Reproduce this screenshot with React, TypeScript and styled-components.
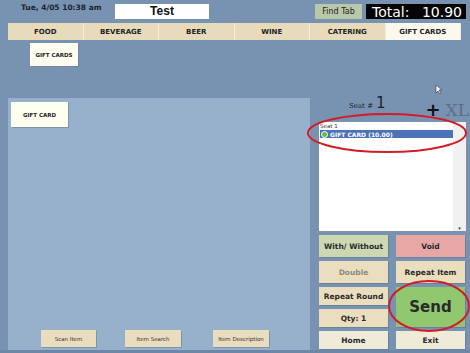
import styled, { createGlobalStyle } from "styled-components";

const Global = createGlobalStyle`
  body {
    margin: 0;
    background: #7893b2;
    font-family: "DejaVu Sans", Verdana, sans-serif;
  }
`;

const Screen = styled.div`
  position: relative;
  width: 470px;
  height: 353px;
  overflow: hidden;
  background: #7893b2;
`;

const TopBar = styled.div`
  height: 23px;
  display: flex;
  align-items: flex-start;
  padding-top: 4px;
  box-sizing: border-box;
`;

const DateText = styled.div`
  font-size: 7.5px;
  font-weight: bold;
  color: #1d2230;
  margin: -1px 0 0 21px;
  width: 94px;
`;

const TitleBox = styled.div`
  width: 94px;
  height: 15px;
  background: #fff;
  font: bold 12px "Liberation Sans", Arial, sans-serif;
  color: #111;
  text-align: center;
  line-height: 15px;
`;

const FindTab = styled.div`
  margin-left: 106px;
  width: 47px;
  height: 15px;
  background: #b9c8a9;
  font: 8px "DejaVu Sans", sans-serif;
  color: #222;
  text-align: center;
  line-height: 15px;
`;

const TotalBox = styled.div`
  margin-left: 4px;
  width: 100px;
  height: 15px;
  background: #050505;
  color: #fff;
  font: 14px "DejaVu Sans", sans-serif;
  display: flex;
  justify-content: space-between;
  align-items: center;
  padding: 0 4px 0 6px;
  box-sizing: border-box;
`;

const Tabs = styled.div`
  margin-left: 8px;
  width: 453px;
  height: 17px;
  display: grid;
  grid-template-columns: repeat(6, 1fr);
`;

const Tab = styled.div<{ $active?: boolean }>`
  background: ${(p) => (p.$active ? "#fbf8ee" : "#e8dbbc")};
  border-right: 1px solid #f4ecd8;
  font-size: 7px;
  font-weight: bold;
  color: #222;
  display: flex;
  align-items: center;
  justify-content: center;
`;

const SubRow = styled.div`
  height: 58px;
  padding: 3px 0 0 30px;
  box-sizing: border-box;
`;

const SubButton = styled.div`
  width: 48px;
  height: 23px;
  background: #fffdf0;
  font-size: 5.5px;
  font-weight: bold;
  color: #222;
  display: flex;
  align-items: center;
  justify-content: center;
  box-shadow: 1px 1px 0 #6f86a3;
`;

const Main = styled.div`
  display: flex;
  height: 252px;
`;

const LeftPanel = styled.div`
  margin-left: 8px;
  width: 302px;
  background: #97b0cc;
  display: flex;
  flex-direction: column;
  justify-content: space-between;
  padding: 4px 0 3px 3px;
  box-sizing: border-box;
`;

const ItemButton = styled.div`
  width: 57px;
  height: 25px;
  background: #fffff0;
  font-size: 5.5px;
  font-weight: bold;
  color: #222;
  display: flex;
  align-items: center;
  justify-content: center;
  box-shadow: 1px 1px 0 #7d93ae;
`;

const BottomTools = styled.div`
  display: flex;
  padding-left: 30px;
  gap: 29px;
`;

const ToolButton = styled.div<{ $w: number; $shift?: number }>`
  width: ${(p) => p.$w}px;
  height: 17px;
  margin-left: ${(p) => p.$shift || 0}px;
  background: #e9ddbf;
  font-size: 5.5px;
  color: #333;
  display: flex;
  align-items: center;
  justify-content: center;
  box-shadow: 1px 1px 0 #7d93ae;
`;

const RightCol = styled.div`
  width: 147px;
  margin-left: 9px;
  display: flex;
  flex-direction: column;
`;

const SeatRow = styled.div`
  height: 24px;
  position: relative;
  display: flex;
  align-items: flex-start;
`;

const SeatLabel = styled.div`
  margin: -4px 0 0 30px;
  font: 7px "DejaVu Serif", serif;
  color: #222;
  display: flex;
  align-items: baseline;
  gap: 3px;
  span {
    font: 15px "DejaVu Sans", sans-serif;
  }
`;

const PlusXL = styled.div`
  margin-left: auto;
  margin-top: 1px;
  display: flex;
  align-items: baseline;
  gap: 5px;
  font: bold 18px "DejaVu Sans", sans-serif;
  color: #111;
  em {
    font: 17px "DejaVu Serif", serif;
    color: #5c6f86;
    font-style: normal;
    margin-right: -3px;
  }
`;

const ListBox = styled.div`
  height: 109px;
  background: #fff;
  position: relative;
  display: flex;
`;

const ListBody = styled.div`
  flex: 1;
  padding: 1px 0 0 1px;
`;

const SeatHead = styled.div`
  font: 5.5px "DejaVu Sans", sans-serif;
  color: #333;
`;

const SelectedRow = styled.div`
  display: flex;
  align-items: center;
  gap: 2px;
  height: 8px;
  background: #4c72b8;
  color: #fff;
  font-size: 6px;
  font-weight: bold;
  margin-top: 1px;
`;

const Dot = styled.div`
  width: 7px;
  height: 7px;
  border-radius: 50%;
  background: #5fbf3f;
  border: 1px solid #fff;
  box-sizing: border-box;
  margin-left: 1px;
`;

const ScrollBar = styled.div`
  width: 13px;
  background: #f1f1f1;
  display: flex;
  align-items: flex-end;
  justify-content: center;
  font-size: 5px;
  color: #333;
`;

const Buttons = styled.div`
  margin-top: 4px;
  display: grid;
  grid-template-columns: 69px 69px;
  grid-template-rows: 22px 22px 18px 18px 18px;
  column-gap: 8px;
  row-gap: 4px;
`;

const ActionButton = styled.div<{ $bg?: string; $dim?: boolean; $big?: boolean }>`
  background: ${(p) => p.$bg || "#eadebf"};
  color: ${(p) => (p.$dim ? "#8d8a82" : "#2a2a2a")};
  font-size: ${(p) => (p.$big ? "15px" : "7.5px")};
  font-weight: bold;
  display: flex;
  align-items: center;
  justify-content: center;
  box-shadow: 1px 1px 0 #6a809c;
  ${(p) => (p.$big ? "grid-row: span 2;" : "")}
`;

const Ring = styled.svg`
  position: absolute;
  pointer-events: none;
`;

const BottomStrip = styled.div`
  height: 3px;
  background: #6d87a6;
`;

export default function App() {
  return (
    <Screen>
      <Global />
      <TopBar>
        <DateText>Tue, 4/05 10:38 am</DateText>
        <TitleBox>Test</TitleBox>
        <FindTab>Find Tab</FindTab>
        <TotalBox>
          <span>Total:</span>
          <span>10.90</span>
        </TotalBox>
      </TopBar>
      <Tabs>
        <Tab>FOOD</Tab>
        <Tab>BEVERAGE</Tab>
        <Tab>BEER</Tab>
        <Tab>WINE</Tab>
        <Tab>CATERING</Tab>
        <Tab $active>GIFT CARDS</Tab>
      </Tabs>
      <SubRow>
        <SubButton>GIFT CARDS</SubButton>
      </SubRow>
      <Main>
        <LeftPanel>
          <ItemButton>GIFT CARD</ItemButton>
          <BottomTools>
            <ToolButton $w={55}>Scan Item</ToolButton>
            <ToolButton $w={56}>Item Search</ToolButton>
            <ToolButton $w={56} $shift={3}>Item Description</ToolButton>
          </BottomTools>
        </LeftPanel>
        <RightCol>
          <SeatRow>
            <SeatLabel>
              Seat # <span>1</span>
            </SeatLabel>
            <PlusXL>
              +<em>XL</em>
            </PlusXL>
          </SeatRow>
          <ListBox>
            <ListBody>
              <SeatHead>Seat 1</SeatHead>
              <SelectedRow>
                <Dot />
                GIFT CARD (10.00)
              </SelectedRow>
            </ListBody>
            <ScrollBar>▾</ScrollBar>
          </ListBox>
          <Buttons>
            <ActionButton $bg="#cbd8b2">With/ Without</ActionButton>
            <ActionButton $bg="#e8a7a5">Void</ActionButton>
            <ActionButton $dim>Double</ActionButton>
            <ActionButton>Repeat Item</ActionButton>
            <ActionButton>Repeat Round</ActionButton>
            <ActionButton $bg="#90c76f" $big>
              Send
            </ActionButton>
            <ActionButton>Qty: 1</ActionButton>
            <ActionButton $bg="#f0ead8">Home</ActionButton>
            <ActionButton $bg="#f0ead8">Exit</ActionButton>
          </Buttons>
        </RightCol>
      </Main>
      <BottomStrip />
      <Ring width="470" height="353" style={{ left: 0, top: 0 }}>
        <ellipse cx="387" cy="133" rx="79" ry="19" fill="none" stroke="#d21d26" strokeWidth="2" />
        <ellipse cx="429" cy="306" rx="40" ry="25" fill="none" stroke="#d21d26" strokeWidth="2" />
        <path d="M436 85 l0 8 l2 -2 l2 3 l1 -1 l-2 -3 l3 0 z" fill="#fff" stroke="#333" strokeWidth="0.6" />
      </Ring>
    </Screen>
  );
}
